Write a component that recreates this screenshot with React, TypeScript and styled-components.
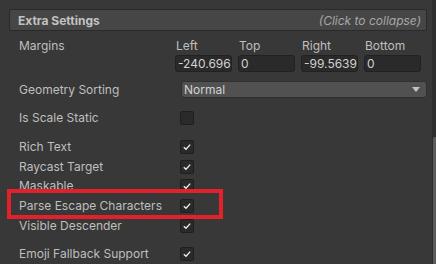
import React from 'react';
import styled, { createGlobalStyle } from 'styled-components';

const GlobalStyle = createGlobalStyle`
  html, body {
    margin: 0;
    padding: 0;
    background-color: #383838;
    font-family: Inter, 'Noto Sans', sans-serif;
    font-size: 12px;
    color: #bfbfbf;
  }
`;

const Page = styled.div`
  position: relative;
  display: flex;
  width: 436px;
  height: 264px;
  overflow: hidden;
  background-color: #383838;
`;

const Content = styled.div`
  flex: 1;
  padding: 9px 5px 0 9px;
  display: flex;
  flex-direction: column;
`;

const ScrollTrack = styled.div`
  width: 4px;
  background-color: #2e2e2e;
  display: flex;
  flex-direction: column;
`;

const ScrollThumb = styled.div`
  margin-top: 137px;
  flex: 1;
  margin-left: 1px;
  background-color: #5c5c5c;
  border-radius: 2px 0 0 0;
`;

const Header = styled.div`
  height: 22px;
  border: 1px solid #2a2a2a;
  border-radius: 2px;
  background-color: #464646;
  display: flex;
  align-items: center;
  justify-content: space-between;
  padding: 1px 5px 0 8px;
  box-sizing: border-box;
`;

const HeaderTitle = styled.span`
  font-weight: 700;
  color: #c2c2c2;
`;

const HeaderHint = styled.span`
  font-style: italic;
  color: #a6a6a6;
`;

const MarginsBlock = styled.div`
  display: flex;
  margin-top: 7px;
`;

const Label = styled.div`
  width: 161px;
  padding-left: 10px;
  flex-shrink: 0;
  white-space: nowrap;
  line-height: 16px;
`;

const MarginsGrid = styled.div`
  margin-left: -5px;
  width: 246px;
  display: grid;
  grid-template-columns: repeat(4, 57px);
  column-gap: 6px;
`;

const SubLabel = styled.div`
  height: 16px;
  line-height: 16px;
  padding-left: 1px;
`;

const NumberField = styled.div`
  height: 17px;
  margin-top: 1px;
  line-height: 16px;
  box-sizing: border-box;
  background-color: #2a2a2a;
  border: 1px solid #212121;
  border-radius: 3px;
  padding-left: 2px;
  color: #d2d2d2;
  white-space: nowrap;
  overflow: hidden;
`;

const Row = styled.div<{ $gap: number }>`
  display: flex;
  align-items: center;
  height: 20px;
  margin-top: ${p => p.$gap}px;
`;

const Dropdown = styled.div`
  margin-left: 1px;
  flex: 1;
  height: 17px;
  box-sizing: border-box;
  background-color: #515151;
  border: 1px solid #303030;
  border-radius: 3px;
  display: flex;
  align-items: center;
  justify-content: space-between;
  padding: 0 6px 0 2px;
  color: #d2d2d2;
`;

const Arrow = styled.span`
  width: 0;
  height: 0;
  border-left: 4px solid transparent;
  border-right: 4px solid transparent;
  border-top: 5px solid #c4c4c4;
`;

const Box = styled.div`
  width: 14px;
  height: 14px;
  box-sizing: border-box;
  background-color: #2a2a2a;
  border: 1px solid #1e1e1e;
  border-radius: 2px;
  display: flex;
  align-items: center;
  justify-content: center;
`;

const Highlight = styled.div`
  position: absolute;
  left: 7px;
  top: 189px;
  width: 216px;
  height: 30px;
  box-sizing: border-box;
  border: 4px solid #e3212a;
  pointer-events: none;
`;

const Checkbox: React.FC<{ checked?: boolean }> = ({ checked }) => (
  <Box>
    {checked && (
      <svg width="10" height="10" viewBox="0 0 10 10">
        <path d="M1.8 5.2 L4 7.3 L8.2 2.6" fill="none" stroke="#eeeeee" strokeWidth="1.3" />
      </svg>
    )}
  </Box>
);

const margins = [
  { name: 'Left', value: '-240.696' },
  { name: 'Top', value: '0' },
  { name: 'Right', value: '-99.5639' },
  { name: 'Bottom', value: '0' },
];

const toggles = [
  { label: 'Is Scale Static', checked: false, gap: 8 },
  { label: 'Rich Text', checked: true, gap: 9 },
  { label: 'Raycast Target', checked: true, gap: 0 },
  { label: 'Maskable', checked: true, gap: 0 },
  { label: 'Parse Escape Characters', checked: true, gap: 0 },
  { label: 'Visible Descender', checked: true, gap: 0 },
  { label: 'Emoji Fallback Support', checked: true, gap: 8 },
];

const App: React.FC = () => {
  return (
    <Page>
      <GlobalStyle />
      <Content>
        <Header>
          <HeaderTitle>Extra Settings</HeaderTitle>
          <HeaderHint>(Click to collapse)</HeaderHint>
        </Header>
        <MarginsBlock>
          <Label>Margins</Label>
          <MarginsGrid>
            {margins.map(m => (
              <div key={m.name}>
                <SubLabel>{m.name}</SubLabel>
                <NumberField>{m.value}</NumberField>
              </div>
            ))}
          </MarginsGrid>
        </MarginsBlock>
        <Row $gap={8}>
          <Label>Geometry Sorting</Label>
          <Dropdown>
            <span>Normal</span>
            <Arrow />
          </Dropdown>
        </Row>
        {toggles.map(t => (
          <Row key={t.label} $gap={t.gap}>
            <Label>{t.label}</Label>
            <Checkbox checked={t.checked} />
          </Row>
        ))}
      </Content>
      <ScrollTrack>
        <ScrollThumb />
      </ScrollTrack>
      <Highlight />
    </Page>
  );
};

export default App;
